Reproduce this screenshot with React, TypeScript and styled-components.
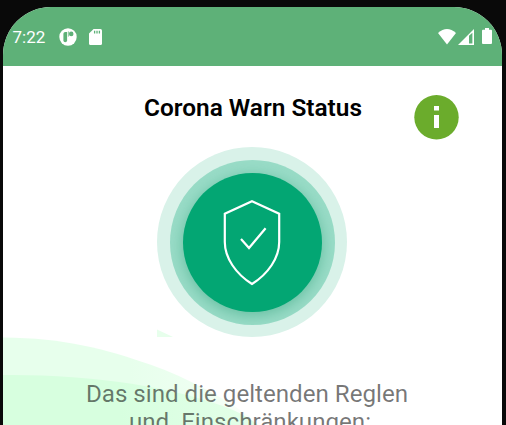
import React from "react";
import styled, { createGlobalStyle } from "styled-components";

const GlobalStyle = createGlobalStyle`
  * { box-sizing: border-box; }
  body { margin: 0; background: #090909; font-family: Roboto, sans-serif; overflow: hidden; }
`;

const Device = styled.div`
  width: 506px;
  height: 425px;
  padding: 7px 4px 0 3px;
  background: #090909;
  overflow: hidden;
`;

const Screen = styled.div`
  position: relative;
  display: flex;
  flex-direction: column;
  height: 418px;
  background: #fff;
  border-radius: 48px 48px 0 0;
  overflow: hidden;
`;

const StatusBar = styled.header`
  display: flex;
  flex: none;
  align-items: center;
  justify-content: space-between;
  height: 59px;
  padding: 0 10px 0 9.5px;
  background: #5eb178;
  color: #fff;
`;

const StatusGroup = styled.div<{ $gap: number }>`
  display: flex;
  align-items: center;
  gap: ${(p) => p.$gap}px;
  svg { display: block; }
`;

const Clock = styled.span`
  width: 34px;
  font-size: 17px;
  line-height: 20px;
  white-space: nowrap;
`;

const Backdrop = styled.svg`
  position: absolute;
  left: 0;
  top: 0;
`;

const Content = styled.main`
  position: relative;
  display: flex;
  flex-direction: column;
  align-items: center;
`;

const TitleRow = styled.div`
  display: grid;
  grid-template-columns: 1fr auto 1fr;
  width: 100%;
  height: 81px;
`;

const Title = styled.h1`
  grid-column: 2;
  margin: 27px 0 0 1px;
  font-size: 24.4px;
  line-height: 30px;
  font-weight: 600;
  color: #000;
  white-space: nowrap;
`;

const InfoButton = styled.button`
  justify-self: end;
  width: 45px;
  height: 45px;
  margin: 29px 43px 0 0;
  padding: 0;
  border: 0;
  background: none;
  svg { display: block; }
`;

const Halo = styled.div`
  display: grid;
  place-items: center;
  width: 190px;
  height: 190px;
  margin-right: 1px;
  border-radius: 50%;
  background: #d9f2e9;
`;

const Ring = styled.div`
  display: grid;
  place-items: center;
  width: 165px;
  height: 165px;
  border-radius: 50%;
  background: #99dcc7;
  overflow: hidden;
`;

const Disc = styled.div`
  display: grid;
  place-items: center;
  width: 139px;
  height: 139px;
  border-radius: 50%;
  background: #03a673;
  box-shadow: 0 3px 14px rgba(50, 160, 122, 0.5);
`;

const Message = styled.p`
  display: flex;
  flex-direction: column;
  align-items: center;
  margin: 43px 0 0;
  font-size: 24.15px;
  line-height: 28px;
  color: rgba(0, 0, 0, 0.54);
  white-space: pre;
`;

const MessageLine = styled.span<{ $trailing?: number }>`
  padding-right: ${(p) => p.$trailing ?? 0}px;
`;

function NotificationIcon() {
  return (
    <svg width="18" height="18" viewBox="0 0 18 18">
      <circle cx="9" cy="9" r="8.7" fill="#fff" />
      <path
        d="M8.1 3.9H6.2Q4.4 3.9 4.4 5.7V12.3Q4.4 14.3 6.3 14.3Q8.1 14.3 8.1 12.3V3.9Z"
        fill="#5eb178"
      />
      <path d="M9.4 3.4V8.6" stroke="#5eb178" strokeWidth="0.7" />
      <circle cx="12.2" cy="5.9" r="2.3" fill="#5eb178" />
    </svg>
  );
}

function SdCardIcon() {
  return (
    <svg width="13" height="16" viewBox="0 0 13 16">
      <path d="M4.6 0H11.5Q13 0 13 1.5V14.5Q13 16 11.5 16H1.5Q0 16 0 14.5V4.6Z" fill="#fff" />
      <path d="M5.6 1.7V4.6M8 1.7V4.6M10.4 1.7V4.6" stroke="#5eb178" strokeWidth="1.3" />
    </svg>
  );
}

function WifiIcon() {
  return (
    <svg width="18" height="16" viewBox="0 0 18 16">
      <path d="M0 4Q9-4 18 4L9 15.5Z" fill="#fff" />
    </svg>
  );
}

function SignalIcon() {
  return (
    <svg width="16" height="16" viewBox="0 0 16 16">
      <path fillRule="evenodd" d="M0 16L16 0V16ZM11 6.8V14.5H14.4V3.8Z" fill="#fff" />
    </svg>
  );
}

function BatteryIcon() {
  return (
    <svg width="10" height="17" viewBox="0 0 10 17">
      <path d="M3 0H7V1.8H9Q10 1.8 10 2.8V15Q10 16 9 16H1Q0 16 0 15V2.8Q0 1.8 1 1.8H3Z" fill="#fff" />
    </svg>
  );
}

function InfoIcon() {
  return (
    <svg width="45" height="45" viewBox="0 0 45 45">
      <circle cx="22.5" cy="22.2" r="22.2" fill="#6bac2c" />
      <path d="M20 11H25V15.6H20ZM20 20H25V33H20Z" fill="#fff" />
    </svg>
  );
}

function ShieldIcon() {
  return (
    <svg width="60" height="88" viewBox="0 0 60 88" fill="none" stroke="#fff" strokeWidth="2.2">
      <path d="M30 3.2L57.2 15.8V44C57.2 60 46 76 30 86C14 76 2.8 60 2.8 44V15.8Z" />
      <path d="M19 41L27 50L43.6 30.2" />
    </svg>
  );
}

export default function App() {
  return (
    <>
      <GlobalStyle />
      <Device>
        <Screen>
          <Backdrop width="499" height="418" viewBox="3 7 499 418">
            <defs>
              <linearGradient id="outerWave" gradientUnits="userSpaceOnUse" x1="130" y1="0" x2="262" y2="0">
                <stop offset="0" stopColor="#e7ffec" />
                <stop offset="0.6" stopColor="#effff2" />
                <stop offset="1" stopColor="#ffffff" />
              </linearGradient>
              <linearGradient id="innerWave" gradientUnits="userSpaceOnUse" x1="120" y1="0" x2="262" y2="0">
                <stop offset="0" stopColor="#d7ffdf" />
                <stop offset="1" stopColor="#e4ffe9" />
              </linearGradient>
            </defs>
            <path d="M3 337.5C65 338 105 349 150 364.5C188 378 225 398 262 425H3Z" fill="url(#outerWave)" />
            <path d="M3 375C85 374 175 386 233 410Q247 416 258 425H3Z" fill="url(#innerWave)" />
            <path d="M157 329.5L173 337H157Z" fill="#e7ffec" />
          </Backdrop>
          <StatusBar>
            <StatusGroup $gap={12}>
              <Clock>7:22</Clock>
              <NotificationIcon />
              <SdCardIcon />
            </StatusGroup>
            <StatusGroup $gap={8}>
              <StatusGroup $gap={2}>
                <WifiIcon />
                <SignalIcon />
              </StatusGroup>
              <BatteryIcon />
            </StatusGroup>
          </StatusBar>
          <Content>
            <TitleRow>
              <Title>Corona Warn Status</Title>
              <InfoButton aria-label="Info">
                <InfoIcon />
              </InfoButton>
            </TitleRow>
            <Halo>
              <Ring>
                <Disc>
                  <ShieldIcon />
                </Disc>
              </Ring>
            </Halo>
            <Message>
              <MessageLine $trailing={11}>Das sind die geltenden Reglen</MessageLine>
              <MessageLine $trailing={5}>{"und  Einschränkungen:"}</MessageLine>
            </Message>
          </Content>
        </Screen>
      </Device>
    </>
  );
}
